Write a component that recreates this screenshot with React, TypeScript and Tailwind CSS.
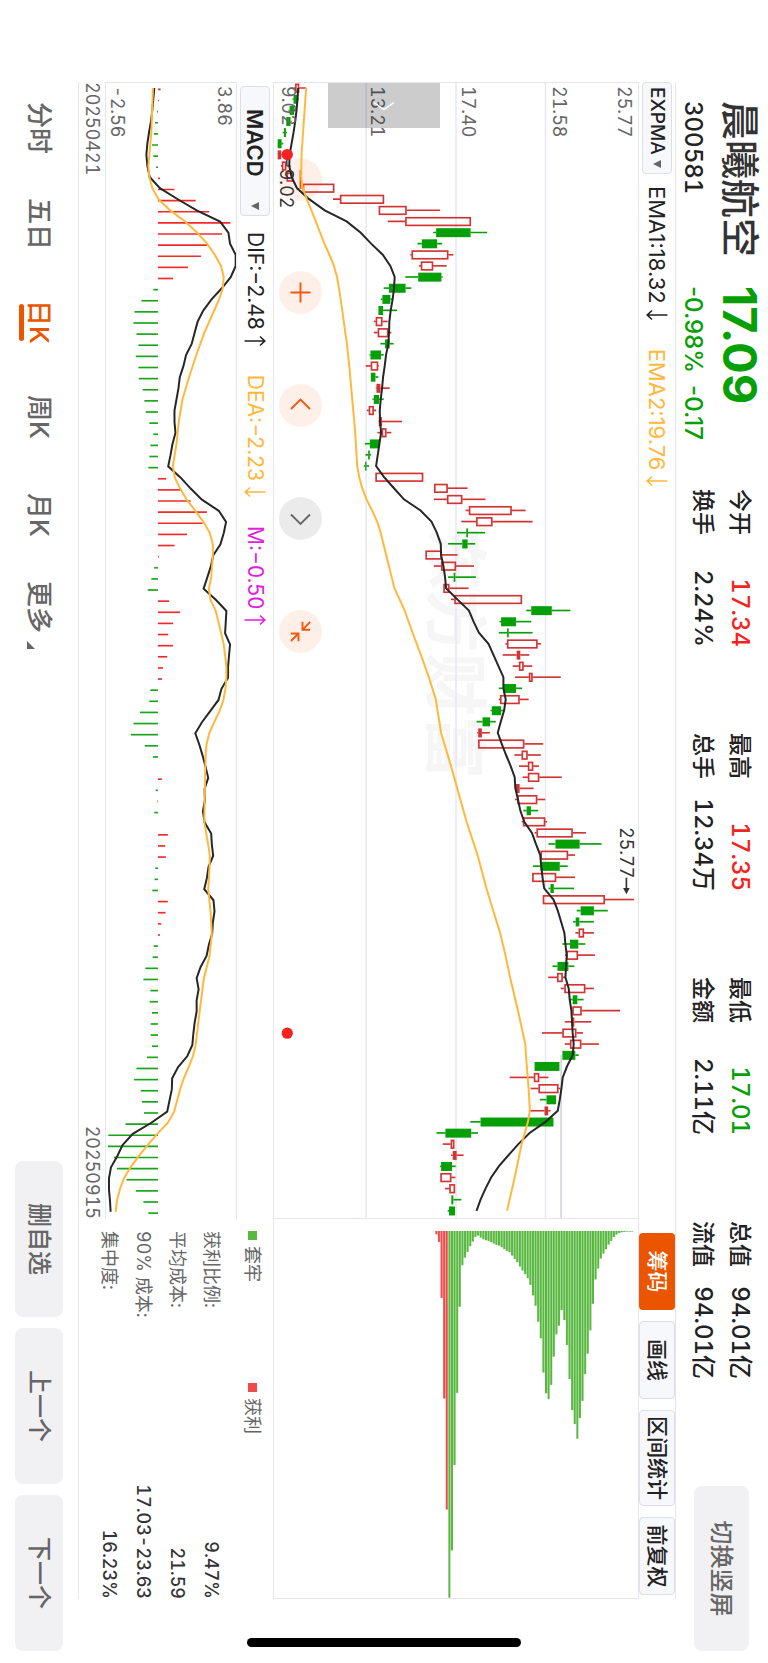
import React from "react";

/* [kind, low, body bottom, body top, high] in thirds of a pixel above the chart floor.
   r = hollow rising, s = solid red, g = falling */
type Candle = [string, number, number, number, number];

const CANDLES: Candle[] = [
  ["r", 59, 64, 76, 96], ["g", 56, 59, 71, 74], ["g", 44, 47, 61, 66], ["g", 36, 37, 50, 53],
  ["g", 26, 30, 36, 39], ["g", 11, 11, 23, 28], ["s", 11, 11, 22, 30], ["r", 21, 24, 37, 50],
  ["r", 38, 38, 58, 58], ["r", 87, 87, 182, 182], ["r", 178, 199, 332, 332], ["r", 316, 316, 400, 501],
  ["r", 343, 396, 594, 594], ["g", 480, 489, 593, 643], ["g", 433, 446, 492, 507], ["r", 411, 415, 526, 541],
  ["r", 437, 443, 480, 521], ["g", 396, 435, 505, 509], ["g", 331, 347, 397, 414], ["g", 322, 327, 351, 356],
  ["g", 315, 315, 329, 371], ["r", 301, 307, 327, 343], ["r", 301, 313, 345, 354], ["g", 321, 335, 349, 361],
  ["g", 288, 291, 323, 331], ["r", 277, 292, 314, 316], ["g", 292, 292, 306, 315], ["s", 307, 309, 321, 349],
  ["g", 297, 301, 317, 331], ["r", 280, 286, 301, 308], ["s", 315, 316, 326, 386], ["r", 312, 325, 339, 354],
  ["g", 274, 289, 318, 318], ["g", 276, 284, 289, 293], ["g", 271, 275, 279, 287], ["r", 306, 306, 450, 450],
  ["r", 483, 483, 524, 584], ["r", 482, 522, 568, 638], ["r", 578, 588, 717, 759], ["r", 565, 610, 659, 780],
  ["g", 552, 580, 585, 637], ["g", 525, 568, 584, 607], ["r", 457, 457, 506, 554], ["r", 482, 504, 549, 603],
  ["g", 525, 542, 547, 609], ["r", 511, 511, 529, 587], ["r", 534, 544, 748, 748], ["g", 761, 776, 838, 894],
  ["g", 680, 685, 730, 776], ["g", 678, 703, 708, 780], ["r", 698, 703, 795, 805], ["s", 690, 732, 743, 770],
  ["r", 720, 739, 753, 779], ["r", 727, 769, 780, 865], ["g", 678, 691, 730, 748], ["r", 678, 682, 741, 768],
  ["g", 653, 657, 685, 697], ["g", 611, 629, 652, 669], ["s", 613, 616, 627, 651], ["r", 616, 616, 755, 812],
  ["r", 725, 747, 765, 805], ["r", 739, 766, 782, 799], ["r", 750, 766, 800, 868], ["s", 727, 730, 741, 783],
  ["r", 727, 734, 794, 818], ["g", 752, 762, 775, 797], ["r", 747, 751, 818, 824], ["r", 786, 792, 901, 941],
  ["g", 828, 849, 922, 988], ["r", 804, 804, 887, 908], ["g", 781, 804, 862, 886], ["r", 779, 779, 851, 908],
  ["g", 828, 834, 844, 905], ["r", 811, 811, 998, 1086], ["g", 913, 925, 965, 1007], ["g", 902, 910, 921, 965],
  ["r", 909, 919, 935, 965], ["g", 870, 893, 918, 939], ["r", 878, 882, 917, 968], ["g", 840, 855, 888, 906],
  ["r", 827, 854, 871, 879], ["r", 865, 876, 939, 965], ["g", 891, 901, 915, 934], ["r", 900, 900, 928, 1044],
  ["s", 877, 897, 906, 957], ["r", 808, 870, 912, 932], ["r", 877, 893, 927, 980], ["g", 870, 870, 909, 919],
  ["g", 786, 786, 861, 861], ["r", 711, 784, 800, 828], ["r", 774, 798, 858, 863], ["g", 802, 822, 851, 851],
  ["s", 769, 816, 827, 834], ["g", 592, 623, 843, 843], ["g", 490, 517, 595, 615], ["r", 509, 533, 544, 544],
  ["s", 534, 539, 551, 572], ["g", 501, 504, 537, 548], ["r", 502, 502, 535, 547], ["r", 516, 529, 546, 546],
  ["g", 535, 535, 541, 565], ["g", 524, 528, 546, 546],
];

const EMA1 = [
  73, 71, 68, 64, 59, 53, 47, 46, 53, 69, 106, 153, 219, 261, 293, 328, 351, 364, 362, 358, 352, 348, 347, 345, 338,
  334, 329, 326, 322, 319, 320, 323, 318, 313, 308, 332, 362, 392, 442, 475, 491, 503, 504, 511, 516, 519, 553, 588,
  602, 618, 647, 662, 677, 692, 692, 699, 694, 684, 675, 687, 700, 714, 726, 728, 736, 743, 755, 778, 790, 803, 806,
  810, 815, 843, 856, 866, 876, 879, 883, 881, 879, 889, 892, 897, 899, 901, 904, 901, 884, 871, 867, 862, 856, 819,
  771, 737, 707, 678, 655, 638, 623, 611,
];

/* sparse [day, level] pairs */
const EMA2: [number, number][] = [
  [0, 97], [3, 90], [6, 83], [8, 82], [9, 87], [10, 99], [11, 113], [12, 126], [13, 139], [14, 152], [15, 167],
  [16, 181], [17, 190], [18, 196], [20, 206], [22, 215], [23, 220], [25, 227], [27, 233], [31, 245], [34, 251],
  [35, 257], [36, 266], [37, 279], [38, 296], [39, 311], [40, 322], [41, 330], [44, 355], [45, 363], [46, 379],
  [47, 394], [49, 418], [51, 443], [53, 467], [55, 488], [58, 504], [61, 534], [64, 562], [66, 581], [69, 614],
  [72, 641], [73, 651], [76, 682], [78, 698], [80, 712], [83, 736], [86, 758], [87, 760], [90, 768], [92, 772],
  [93, 766], [95, 747], [98, 726], [101, 703],
];

const HISTOGRAM = [
  8, 3, -3, -9, -12, -18, -14, -6, 6, 50, 114, 155, 219, 194, 148, 130, 91, 46, -14, -50, -71, -74, -65, -59, -67, -59,
  -58, -46, -41, -37, -26, -14, -23, -26, -29, 25, 71, 99, 148, 135, 88, 50, 3, -11, -20, -31, 34, 67, 46, 31, 46, 28,
  15, 12, -23, -26, -54, -74, -82, -40, -15, 0, 12, -7, -2, -11, 0, 30, 22, 24, -8, -10, -17, 30, 23, 10, 6, -13, -16,
  -38, -44, -23, -25, -18, -22, -22, -18, -33, -65, -72, -52, -48, -42, -98, -150, -151, -133, -124, -95, -67, -44, -29,
];

const DIF = [
  462, 459, 456, 452, 446, 441, 438, 441, 448, 479, 533, 590, 661, 686, 691, 708, 708, 693, 666, 635, 610, 593, 584,
  575, 558, 550, 539, 535, 529, 523, 523, 526, 517, 511, 504, 541, 572, 606, 657, 679, 672, 662, 640, 633, 622, 611,
  648, 680, 678, 676, 691, 688, 685, 685, 665, 656, 631, 606, 586, 598, 608, 617, 625, 614, 615, 609, 614, 634, 636,
  640, 626, 621, 613, 641, 644, 639, 637, 627, 620, 602, 590, 596, 590, 590, 584, 580, 577, 562, 534, 516, 515, 508,
  501, 453, 397, 366, 350, 331, 325, 325, 328, 330,
];

const DEA: [number, number][] = [
  [0, 458], [4, 453], [7, 444], [8, 447], [9, 456], [10, 475], [11, 510], [12, 555], [13, 592], [14, 622], [15, 645],
  [16, 664], [17, 672], [18, 669], [19, 658], [20, 643], [22, 613], [24, 589], [26, 567], [28, 547], [30, 536],
  [32, 529], [34, 518], [35, 524], [36, 540], [37, 560], [38, 586], [39, 611], [40, 630], [41, 639], [42, 639],
  [44, 634], [45, 627], [46, 632], [47, 648], [49, 664], [50, 672], [52, 680], [53, 680], [54, 677], [55, 671],
  [56, 659], [57, 643], [58, 628], [59, 620], [60, 617], [66, 613], [68, 625], [69, 630], [70, 629], [72, 625],
  [74, 632], [76, 636], [78, 629], [80, 612], [83, 599], [86, 587], [87, 579], [88, 566], [89, 551], [90, 540],
  [91, 531], [92, 522], [93, 503], [94, 471], [95, 442], [96, 415], [97, 390], [98, 370], [99, 358], [100, 349],
  [101, 345],
];

const CHIPS_LOSS = [
  1103, 961, 704, 487, 228, 103, 80, 63, 46, 32, 18, 14, 20, 25, 28, 30, 34, 38, 42, 44, 49, 55, 60, 64, 74, 84, 94,
  107, 119, 130, 142, 162, 194, 225, 273, 323, 426, 488, 506, 463, 378, 311, 285, 238, 268, 343, 445, 539, 581, 625,
  563, 511, 431, 369, 299, 219, 146, 113, 83, 68, 55, 41, 30, 18, 11, 6, 4, 3, 2, 2, 2,
];
const CHIPS_GAIN = [838, 504, 202, 33, 10];

const STEP = 33.38;
const dayX = (i: number) => 15 + i * STEP;
const FLOOR = 1098;
const MACD_TOP = 709;

const points = (pairs: [number, number][], top: number) =>
  pairs.map(([i, v]) => `${dayX(i).toFixed(1)},${top - v}`).join(" ");
const daily = (values: number[]) => values.map((v, i) => [i, v] as [number, number]);

function PriceSvg() {
  return (
    <svg viewBox="0 0 3408 1098" preserveAspectRatio="none" className="block h-full w-full" aria-label="K线图">
      <g stroke="#e3e6ee" strokeWidth="4">
        <path d="M0 279H3408M0 549H3408M0 820H3408" />
      </g>
      <path d={`M${dayX(87)} 232H3408`} stroke="#c9cad3" strokeWidth="4" />
      {CANDLES.map(([kind, low, bottom, top, high], i) => {
        const x = dayX(i);
        const color = kind === "g" ? "#079f07" : "#d23434";
        return (
          <g key={i} stroke={color} strokeWidth="5">
            {low < bottom && <path d={`M${x} ${FLOOR - low}V${FLOOR - bottom}`} />}
            {high > top && <path d={`M${x} ${FLOOR - top}V${FLOOR - high}`} />}
            {kind === "r" ? (
              <rect x={x - 11} y={FLOOR - top + 2} width="23" height={top - bottom - 4} fill="none" />
            ) : (
              <rect x={x - 13} y={FLOOR - top} width="27" height={top - bottom} fill={color} stroke="none" />
            )}
          </g>
        );
      })}
      <polyline points={points(daily(EMA1), FLOOR)} fill="none" stroke="#262626" strokeWidth="6" />
      <polyline points={points(EMA2, FLOOR)} fill="none" stroke="#ffb83c" strokeWidth="6" />
      <circle cx="215" cy="1058" r="17" fill="#f52222" />
      <circle cx="2853" cy="1058" r="17" fill="#f52222" />
      <path d="M2386 35H2420" stroke="#333" strokeWidth="5" />
      <path d="M2417 25L2436 35L2417 45Z" fill="#333" />
    </svg>
  );
}

function MacdSvg() {
  return (
    <svg viewBox="0 0 3408 393" preserveAspectRatio="none" className="block h-full w-full" aria-label="MACD">
      {HISTOGRAM.map((v, i) =>
        v === 0 ? null : (
          <path
            key={i}
            d={`M${dayX(i) + 4} 236V${236 - v}`}
            stroke={v > 0 ? "#f22a2a" : "#18a418"}
            strokeWidth="5"
          />
        )
      )}
      <polyline points={points(daily(DIF), MACD_TOP)} fill="none" stroke="#262626" strokeWidth="6" />
      <polyline points={points(DEA, MACD_TOP)} fill="none" stroke="#ffb83c" strokeWidth="6" />
    </svg>
  );
}

function ChipsSvg() {
  const pitch = 7.878;
  const y = (i: number) => FLOOR - 529 - i * pitch;
  return (
    <svg viewBox="0 0 1140 1098" preserveAspectRatio="none" className="block h-full w-full" aria-label="筹码分布">
      {CHIPS_LOSS.map((v, i) => (
        <g key={i} fill="#58b840">
          <rect x="36" y={y(i) - 3} width={v} height="6" />
          {i > 0 && (
            <rect x="36" y={y(i) + 3} width={Math.min(v, CHIPS_LOSS[i - 1])} height="2" opacity="0.45" />
          )}
        </g>
      ))}
      {CHIPS_GAIN.map((v, i) => (
        <g key={i} fill="#ee4b4b">
          <rect x="36" y={y(-1 - i) - 3} width={v} height="6" />
          <rect x="36" y={y(-1 - i) + 3} width={CHIPS_GAIN[i + 1] ?? 0} height="2" opacity="0.45" />
        </g>
      ))}
    </svg>
  );
}

const STATS = [
  [["今开", "17.34", "text-[#f52222]"], ["换手", "2.24%", "text-[#222222]"]],
  [["最高", "17.35", "text-[#f52222]"], ["总手", "12.34万", "text-[#222222]"]],
  [["最低", "17.01", "text-[#06a006]"], ["金额", "2.11亿", "text-[#222222]"]],
  [["总值", "94.01亿", "text-[#222222]"], ["流值", "94.01亿", "text-[#222222]"]],
];

function Header() {
  return (
    <header className="flex h-[92px] shrink-0 items-start pl-[101px] pr-3 font-medium text-[#222222]">
      <div className="flex w-[185px] shrink-0 flex-col gap-[9px] pt-1">
        <h1 className="text-[39px] leading-[48px] text-[#333333]">晨曦航空</h1>
        <p className="text-2xl leading-7">300581</p>
      </div>
      <div className="flex w-[203px] shrink-0 flex-col gap-[9px] whitespace-nowrap pt-1 proportional-nums text-[#06a006]">
        <p className="text-[47px] font-bold leading-[48px]">17.09</p>
        <p className="flex gap-3 text-[24px] leading-7">
          <span>-0.98%</span>
          <span>-0.17</span>
        </p>
      </div>
      <div className="flex flex-1 gap-[86px] pt-[14px]">
        {STATS.map((column, i) => (
          <dl key={i} className="flex w-[158px] flex-col gap-[9px]">
            {column.map(([label, value, color]) => (
              <div key={label} className="flex justify-between whitespace-nowrap leading-7">
                <dt className="text-[23px]">{label}</dt>
                <dd className={`text-[24px] ${color}`}>{value}</dd>
              </div>
            ))}
          </dl>
        ))}
      </div>
      <button className="mt-[19px] h-[55px] w-[165px] shrink-0 rounded-lg bg-[#f1f1f3] text-2xl text-[#666666]">
        切换竖屏
      </button>
    </header>
  );
}

function Triangle() {
  return (
    <svg viewBox="0 0 8 8" className="h-2 w-2" aria-hidden="true">
      <path d="M0 0H8L4 8Z" fill="#666" />
    </svg>
  );
}

function Reading({ text, trend, tone }: { text: string; trend: "up" | "down"; tone: string }) {
  return (
    <span className={`flex items-center gap-[5px] whitespace-nowrap proportional-nums ${tone}`}>
      {text}
      <svg viewBox="0 0 12 22" className="h-[22px] w-3" fill="none" stroke="currentColor" strokeWidth="1.6">
        <path d={trend === "up" ? "M6 21.500V1.500M1.500 6L6 1.200L10.500 6" : "M6 .5V20.500M1.500 16L6 20.800L10.500 16"} />
      </svg>
    </span>
  );
}

function Toolbar() {
  const tool = "h-9 rounded border border-[#dcdfe6] bg-[#f7f8fb] text-[21px] font-medium text-[#222222]";
  return (
    <div className="flex h-[37px] shrink-0 items-center border-t border-[#e3e5e9] pr-1">
      <button className="mr-3 flex h-[30px] w-[92px] items-center justify-between rounded border border-[#dcdfe6] bg-[#f7f8fb] pl-1 pr-[5px] text-[19px] font-medium text-[#222222]">
        EXPMA
        <Triangle />
      </button>
      <div className="flex gap-7 text-[22px]">
        <Reading text="EMA1:18.32" trend="down" tone="text-[#222222]" />
        <Reading text="EMA2:19.76" trend="down" tone="text-[#ffb83c]" />
      </div>
      <div className="ml-auto flex gap-[11px] whitespace-nowrap">
        <button className="h-9 w-[77px] rounded bg-[#eb5500] text-[21px] font-medium text-white">筹码</button>
        <button className={`w-[78px] ${tool}`}>画线</button>
        <button className={`w-24 ${tool}`}>区间统计</button>
        <button className={`w-[78px] ${tool}`}>前复权</button>
      </div>
    </div>
  );
}

function RoundButton({ label, tone, children }: { label: string; tone: string; children: React.ReactNode }) {
  return (
    <button aria-label={label} className={`h-[43px] w-[43px] rounded-full ${tone}`}>
      <svg viewBox="0 0 43 43" fill="none" stroke="currentColor" strokeWidth="1.9" className="h-full w-full">
        {children}
      </svg>
    </button>
  );
}

function PriceChart() {
  const orange = "bg-[#fef0e9] text-[#f2590f]";
  return (
    <div className="relative min-h-0 flex-1 border border-[#e3e6ea]">
      <p className="absolute left-[444px] top-[136px] text-[63px] font-bold leading-[92px] text-[#f6f6f6]">东方财富</p>
      <div className="absolute bottom-[5px] left-[75px] flex gap-[70px]">
        <RoundButton label="缩小" tone={orange}>
          <path d="M12 21.5H31" />
        </RoundButton>
        <RoundButton label="放大" tone={orange}>
          <path d="M11.5 21.5H31.5M21.5 11.5V31.5" />
        </RoundButton>
        <RoundButton label="左移" tone={orange}>
          <path d="M25 12L15.500 21.500L25 31" />
        </RoundButton>
        <RoundButton label="右移" tone="bg-[#ebebeb] text-[#666666]">
          <path d="M17.500 12L27 21.500L17.500 31" />
        </RoundButton>
        <RoundButton label="收起" tone={orange}>
          <path d="M11.800 11.800L19.800 19.500M11.800 19.500H19.800V11.800M31 31L23.500 23.500M23.500 31.200V23.500H31.200" />
        </RoundButton>
      </div>
      <div className="pointer-events-none absolute inset-0">
        <PriceSvg />
      </div>
      <div className="text-lg leading-5 text-[#666666]">
        <span className="absolute left-[3px] top-1">25.77</span>
        <span className="absolute left-[3px] top-[69px]">21.58</span>
        <span className="absolute left-[3px] top-[160px]">17.40</span>
        <span className="absolute left-[3px] top-[251px]">13.21</span>
        <span className="absolute bottom-1 left-[3px]">9.02</span>
      </div>
      <span className="absolute left-[744px] top-[2px] text-lg leading-5 text-[#333333]">25.77</span>
      <span className="absolute bottom-[2px] left-[74px] text-lg leading-5 text-[#333333]">-9.02</span>
      <button aria-label="展开" className="absolute left-0 top-[198px] h-[112px] w-[45px] bg-black/20">
        <svg viewBox="0 0 45 112" className="h-full w-full" fill="none" stroke="#fff" strokeWidth="1.5">
          <path d="M19.500 46L26.500 56L19.500 66" />
        </svg>
      </button>
    </div>
  );
}

function ChipPanel() {
  const rows = [
    ["获利比例:", "9.47%"],
    ["平均成本:", "21.59"],
    ["90% 成本:", "17.03-23.63"],
    ["集中度:", "16.23%"],
  ];
  return (
    <aside className="flex w-[380px] shrink-0 flex-col">
      <div className="min-h-0 flex-1 border-y border-r border-[#e3e6ea]">
        <ChipsSvg />
      </div>
      <div className="h-[194px] shrink-0 pl-3 text-lg text-[#666666]">
        <div className="flex h-[45px] items-center pb-1">
          <span className="flex w-[152px] items-center gap-1.5">
            <i className="h-[9px] w-[9px] bg-[#58b840]" />
            套牢
          </span>
          <span className="flex items-center gap-1.5">
            <i className="h-[9px] w-[9px] bg-[#ee4b4b]" />
            获利
          </span>
        </div>
        <dl>
          {rows.map(([label, value]) => (
            <div key={label} className="flex h-[34px] items-center justify-between">
              <dt>{label}</dt>
              <dd className="text-[18px] font-medium text-[#333333]">{value}</dd>
            </div>
          ))}
        </dl>
      </div>
    </aside>
  );
}

function Footer() {
  const tab = "text-left text-[26px] font-medium leading-8 text-[#666666]";
  const action = "h-12 w-[156px] rounded-lg bg-[#f1f1f3] text-2xl font-medium text-[#666666]";
  return (
    <footer className="flex h-[78px] shrink-0 items-center whitespace-nowrap pl-[102px] pr-3">
      <nav className="flex items-center">
        <button className={`w-24 ${tab}`}>分时</button>
        <button className={`w-[102px] ${tab}`}>五日</button>
        <button className="relative w-[95px] text-left text-[26px] font-medium leading-8 text-[#eb5500]">
          日K
          <i className="absolute -bottom-1 left-[4px] h-[5px] w-[37px] rounded-full bg-[#eb5500]" />
        </button>
        <button className={`w-[98px] ${tab}`}>周K</button>
        <button className={`w-[88px] ${tab}`}>月K</button>
        <button className={`flex items-end gap-2 ${tab}`}>
          更多
          <svg viewBox="0 0 8 8" className="mb-1 h-2 w-2" aria-hidden="true">
            <path d="M8 0V8H0Z" fill="#666" />
          </svg>
        </button>
      </nav>
      <div className="ml-auto flex gap-[11px]">
        <button className={action}>删自选</button>
        <button className={action}>上一个</button>
        <button className={action}>下一个</button>
      </div>
    </footer>
  );
}

export default function App() {
  return (
    <div className="relative h-screen w-screen overflow-hidden bg-white">
      <main className="absolute left-full top-0 flex h-[100vw] w-[100vh] origin-top-left rotate-90 flex-col bg-white font-[Inter,'Noto_Sans_CJK_SC',sans-serif] tabular-nums">
        <Header />
        <div className="ml-[82px] mr-16 flex min-h-0 flex-1 flex-col border-b border-[#e3e5e9]">
          <Toolbar />
          <div className="flex min-h-0 flex-1">
            <section className="flex min-w-0 flex-1 flex-col">
              <PriceChart />
              <div className="flex h-9 shrink-0 items-center pl-1 text-[22px] text-[#222222]">
                <button className="mr-4 flex h-[30px] w-[130px] items-center justify-between rounded border border-[#dcdfe6] bg-[#f7f8fb] pl-[22px] pr-[5px] font-semibold">
                  MACD
                  <Triangle />
                </button>
                <div className="flex gap-7 text-[21px]">
                  <Reading text="DIF:−2.48" trend="up" tone="text-[#222222]" />
                  <Reading text="DEA:−2.23" trend="down" tone="text-[#ffb83c]" />
                  <Reading text="M:−0.50" trend="up" tone="text-[#e01ee0]" />
                </div>
              </div>
              <div className="relative h-[132px] shrink-0 border-y border-l border-[#e3e6ea]">
                <MacdSvg />
                <div className="text-lg leading-5 text-[#666666]">
                  <span className="absolute left-[3px] top-[2px]">3.86</span>
                  <span className="absolute bottom-[1px] left-[3px]">-2.56</span>
                </div>
              </div>
              <div className="flex h-[26px] shrink-0 items-center justify-between text-lg text-[#666666]">
                <time>20250421</time>
                <time>20250915</time>
              </div>
            </section>
            <ChipPanel />
          </div>
        </div>
        <Footer />
        <div className="absolute right-4 top-[247px] h-[274px] w-[9px] rounded-full bg-black" />
      </main>
    </div>
  );
}
